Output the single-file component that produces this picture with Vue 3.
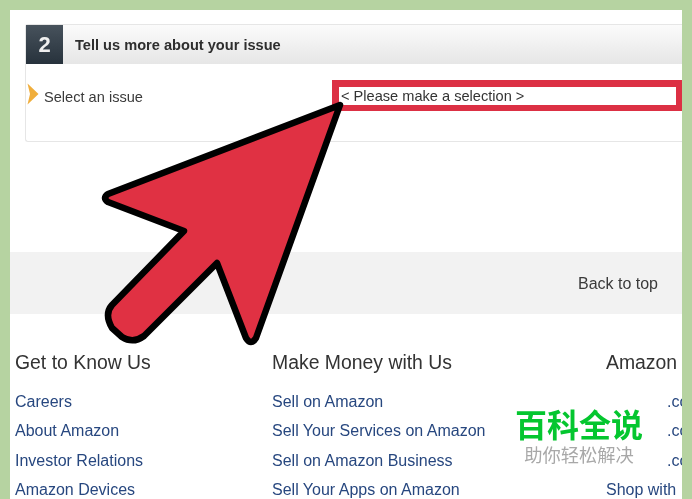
<template>
  <div class="page">
    <div class="sheet">
      <section class="card">
        <div class="card-head">
          <div class="step">2</div>
          <h2 class="card-title">Tell us more about your issue</h2>
        </div>
        <div class="card-row">
          <svg class="marker" viewBox="0 0 12 22" width="12" height="22">
            <path d="M0.5 0.5 L11.5 11 L0.5 21.5 L3 11 Z" fill="#f0ae3c" />
          </svg>
          <span class="row-label">Select an issue</span>
          <div class="picker">&lt; Please make a selection &gt;</div>
        </div>
      </section>

      <div class="back-band">
        <span class="back-link">Back to top</span>
      </div>

      <footer class="links">
        <div class="col" v-for="col in columns" :key="col.title">
          <h3 class="col-title">{{ col.title }}</h3>
          <a class="col-link" v-for="item in col.items" :key="item.id" :class="{ cut: item.cut }">{{ item.text }}</a>
        </div>
      </footer>

      <div class="stamp">
        <div class="stamp-main">百科全说</div>
        <div class="stamp-sub">助你轻松解决</div>
      </div>
    </div>

    <svg class="pointer" viewBox="0 0 692 499" width="692" height="499">
      <path
        d="M340 105 L108 194 Q102 198 108 202 L184 231 L112 305 Q104 314 112 328 L122 337 Q133 344 144 336 L217 263 L246 338 Q251 346 256 338 Z"
        fill="#e03143"
        stroke="#000"
        stroke-width="6.5"
        stroke-linejoin="round"
      />
    </svg>
  </div>
</template>

<script setup>
const columns = [
  {
    title: 'Get to Know Us',
    items: [
      { id: 1, text: 'Careers' },
      { id: 2, text: 'About Amazon' },
      { id: 3, text: 'Investor Relations' },
      { id: 4, text: 'Amazon Devices' }
    ]
  },
  {
    title: 'Make Money with Us',
    items: [
      { id: 1, text: 'Sell on Amazon' },
      { id: 2, text: 'Sell Your Services on Amazon' },
      { id: 3, text: 'Sell on Amazon Business' },
      { id: 4, text: 'Sell Your Apps on Amazon' }
    ]
  },
  {
    title: 'Amazon',
    items: [
      { id: 1, text: '.com', cut: true },
      { id: 2, text: '.com', cut: true },
      { id: 3, text: '.com', cut: true },
      { id: 4, text: 'Shop with Points' }
    ]
  }
]
</script>

<style>
html, body {
  margin: 0;
  background: #b6d3a1;
}
</style>

<style scoped>
.page {
  position: relative;
  width: 692px;
  height: 499px;
  box-sizing: border-box;
  padding: 10px 10px 0;
  overflow: hidden;
  background: #b6d3a1;
  font-family: "Liberation Sans", Arial, sans-serif;
}

.sheet {
  position: relative;
  width: 672px;
  height: 489px;
  padding-top: 14px;
  box-sizing: border-box;
  overflow: hidden;
  background: #fff;
  filter: blur(0.35px);
}

.card {
  height: 118px;
  margin-left: 15px;
  box-sizing: border-box;
  border: 1px solid #e6e6e6;
  border-right: none;
  border-radius: 3px 0 0 3px;
}

.card-head {
  display: flex;
  align-items: center;
  height: 39px;
  background: linear-gradient(to bottom, #fbfbfb, #e6e6e6);
}

.step {
  width: 37px;
  height: 39px;
  display: flex;
  align-items: center;
  justify-content: center;
  background: linear-gradient(to bottom, #47525c, #27323c);
  color: #efefef;
  font-size: 22px;
  font-weight: bold;
}

.card-title {
  margin: 0 0 0 12px;
  font-size: 14.6px;
  font-weight: bold;
  color: #2e2e2e;
}

.card-row {
  display: flex;
  align-items: center;
  height: 31px;
  margin-top: 16px;
}

.marker {
  margin-left: 1px;
  margin-bottom: 3px;
  flex: none;
}

.row-label {
  width: 288px;
  margin-left: 5px;
  padding-top: 2px;
  font-size: 14.6px;
  color: #3a3a3a;
}

.picker {
  flex: 1;
  height: 31px;
  box-sizing: border-box;
  border-style: solid;
  border-color: #dc3044;
  border-width: 7px 6px 6px 7px;
  padding-left: 2px;
  line-height: 19px;
  font-size: 14.6px;
  color: #333;
  background: #fff;
}

.back-band {
  display: flex;
  align-items: center;
  justify-content: flex-end;
  height: 62px;
  box-sizing: border-box;
  margin-top: 110px;
  padding: 2px 24px 0 0;
  background: #f2f2f2;
}

.back-link {
  font-size: 16px;
  color: #3a3a3a;
}

.links {
  display: grid;
  grid-template-columns: 257px 334px 76px;
  padding-left: 5px;
  padding-top: 36px;
}

.col {
  min-width: 0;
  overflow: hidden;
}

.col-title {
  margin: 0 0 13px;
  font-size: 19.4px;
  line-height: 24px;
  font-weight: normal;
  color: #333;
  white-space: nowrap;
}

.col-link {
  display: block;
  height: 29.4px;
  line-height: 29.4px;
  font-size: 16px;
  color: #27477f;
  white-space: nowrap;
}

.col-link.cut {
  padding-left: 61px;
}

.stamp {
  position: absolute;
  left: 502px;
  top: 395px;
  width: 134px;
  text-align: center;
}

.stamp-main {
  font-family: "Noto Sans CJK SC", sans-serif;
  font-size: 32px;
  line-height: 36px;
  font-weight: bold;
  color: #04c62f;
}

.stamp-sub {
  margin-top: 2px;
  font-family: "Noto Sans CJK SC", sans-serif;
  font-size: 18.3px;
  line-height: 22px;
  color: #a8a8a8;
}

.pointer {
  position: absolute;
  left: 0;
  top: 0;
}
</style>
